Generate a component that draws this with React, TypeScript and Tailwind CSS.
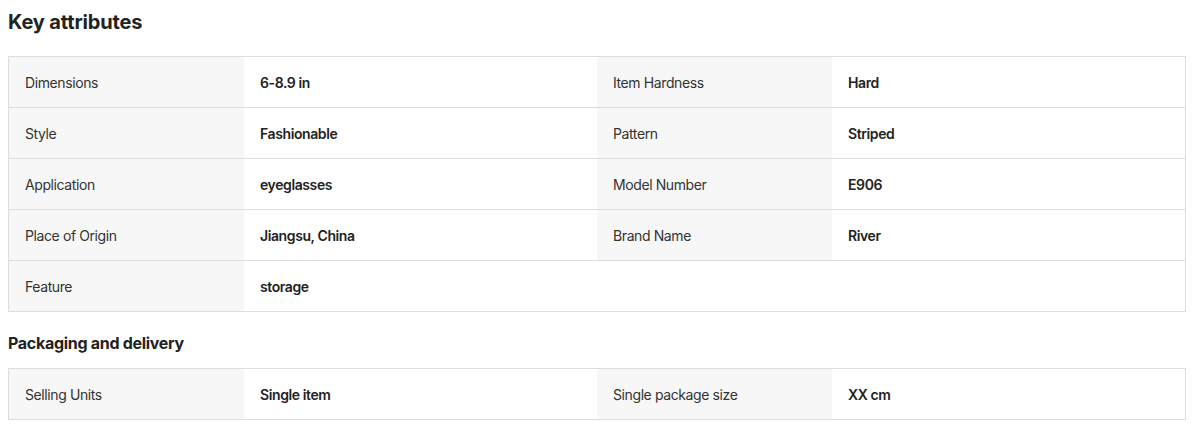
const keyAttrs: [string, string][] = [
  ['Dimensions', '6-8.9 in'],
  ['Item Hardness', 'Hard'],
  ['Style', 'Fashionable'],
  ['Pattern', 'Striped'],
  ['Application', 'eyeglasses'],
  ['Model Number', 'E906'],
  ['Place of Origin', 'Jiangsu, China'],
  ['Brand Name', 'River'],
  ['Feature', 'storage'],
]

const packaging: [string, string][] = [
  ['Selling Units', 'Single item'],
  ['Single package size', 'XX cm'],
]

function AttrTable({ items }: { items: [string, string][] }) {
  const rows: [string, string][][] = []
  for (let i = 0; i < items.length; i += 2) rows.push(items.slice(i, i + 2))
  return (
    <div className="border border-[#dddddd]">
      {rows.map((row, i) => (
        <div
          key={i}
          className={
            'grid grid-cols-[235px_353px_235px_353px] h-[50px] ' +
            (i < rows.length - 1 ? 'border-b border-[#dddddd] box-content' : '')
          }
        >
          {row.map(([label, value]) => (
            <div key={label} className="contents">
              <div className="bg-[#f7f7f7] flex items-center pl-4 text-[14px] tracking-[-0.4px] text-[#333333]">
                {label}
              </div>
              <div className="flex items-center pl-4 text-[14px] tracking-[-0.4px] font-semibold text-[#222222]">
                {value}
              </div>
            </div>
          ))}
        </div>
      ))}
    </div>
  )
}

export default function App() {
  return (
    <div className="bg-white w-[1194px] h-[438px] px-2 pt-[9px] font-['Inter',sans-serif]">
      <h2 className="text-[20px] leading-[26px] tracking-[-0.15px] font-bold text-[#222222]">
        Key attributes
      </h2>
      <div className="mt-[21px]">
        <AttrTable items={keyAttrs} />
      </div>
      <h3 className="mt-[20px] text-[16px] leading-[22px] tracking-[-0.3px] font-bold text-[#222222]">
        Packaging and delivery
      </h3>
      <div className="mt-[14px]">
        <AttrTable items={packaging} />
      </div>
    </div>
  )
}
